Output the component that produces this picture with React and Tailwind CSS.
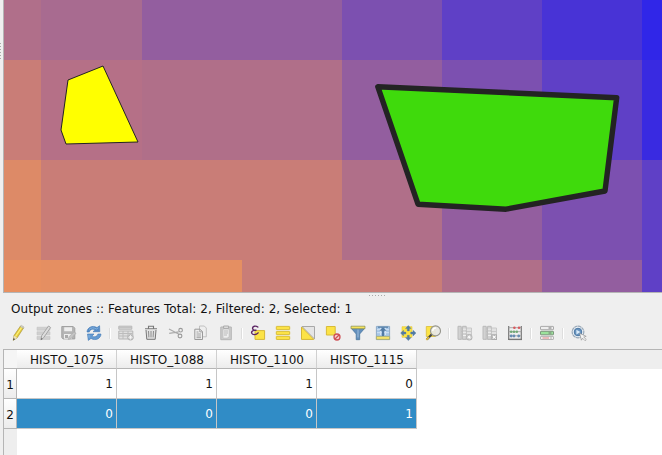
import React from "react";

const raster = [
  ["#b06f8a", "#a86b90", "#935e9f", "#935e9f", "#7c50b0", "#5f40c6", "#4833d6", "#3026e8"],
  ["#c97d77", "#b57087", "#b06f89", "#b06f89", "#935e9f", "#7c50b0", "#5f40c6", "#392ae1"],
  ["#dd8a67", "#c97d77", "#c97d77", "#c97d77", "#b06f89", "#935e9f", "#7c50b0", "#5f40c6"],
  ["#e89060", "#e58f62", "#e58f62", "#c97d77", "#c97d77", "#b06f89", "#935e9f", "#5f40c6"],
];

const columns = ["HISTO_1075", "HISTO_1088", "HISTO_1100", "HISTO_1115"];
const rows = [
  { id: 1, values: [1, 1, 1, 0], selected: false },
  { id: 2, values: [0, 0, 0, 1], selected: true },
];

function Icon({ children }) {
  return (
    <svg className="h-4 w-4 shrink-0 overflow-visible" viewBox="0 0 16 16" fill="none">
      {children}
    </svg>
  );
}

function Separator() {
  return <div className="h-[11px] w-px bg-white shadow-[-1px_0_0_#dedede]" />;
}

const Pencil = () => (
  <Icon>
    <path d="M3 10.5 9.5 1l3 2L6.2 12.8 2.3 15.3z" fill="#e5cc3c" stroke="#aa9740" strokeWidth=".7" />
    <path d="m4.5 11.5 6.5-9.6" stroke="#fff27c" strokeWidth="1.1" />
    <path d="m9.3 1.4 3 2 .8-1.3-2.7-1.7z" fill="#d5d4cd" stroke="#a19f8a" strokeWidth=".5" />
    <path d="m3 10.7 3.1 2.1-3.7 2.4z" fill="#e8dfc3" />
    <path d="m2.7 13.1 1.4 1.1-2.2 1.4z" fill="#444" />
  </Icon>
);

const MultiEdit = () => (
  <Icon>
    <path d="M1 2.2h13v3H1zM1 6.8h13v3H1zM1 11.4h13v3H1z" fill="#d0d0d0" stroke="#c2c2c2" strokeWidth=".6" />
    <path d="M5.6 10.8 12.5 1l2.1 1.5-6.8 10L5 14.8z" fill="#ddd" stroke="#a5a5a5" />
    <path d="m5.3 12.8 1.4 1.1-2 1.4z" fill="#777" />
  </Icon>
);

const Save = () => (
  <Icon>
    <path d="M.8 1.5h11.4l1.6 1.7v10.7H2.2L.8 12.7z" fill="#b5b5b5" stroke="#a2a2a2" />
    <path d="M3.2 2.2h7.8v4H3.2zM3 9h8v4.8H3z" fill="#eee" />
    <path d="M4 10h3v3H4z" fill="#aaa" />
    <path d="m8 11.8 5-5 2 1.5-4.8 5.2-2.8 1z" fill="#c4c4c4" stroke="#aaa" strokeWidth=".7" />
  </Icon>
);

const Refresh = () => (
  <Icon>
    <path d="M1 7c.2-4.4 5.3-7.3 10-4.4l2.6-1.9.2 6H7l2.2-2C6.6 3.5 4 4.2 3.3 7z" fill="#548bc8" stroke="#4278b6" strokeWidth=".6" />
    <path d="M15 9c-.2 4.4-5.3 7.3-10 4.4l-2.7 2L1.5 9H8l-2.1 2.2c2.6 1.2 5.2.6 6-2.2z" fill="#659bd3" stroke="#4278b6" strokeWidth=".6" />
    <path d="M3 4.5c2-2 4.7-2.1 7.4-.5l2-1.2M3 12.8V10" stroke="#9ac2e5" strokeWidth=".7" />
  </Icon>
);

const AddFeature = () => (
  <Icon>
    <path d="M.8 1.2h13v3H.8zM.8 6h14v8H.8z" fill="#e0e0e0" stroke="#b5b5b5" />
    <path d="M1 2.7h12.8M1 8.5h13.5M1 11h13.5M5 6v8M10 6v8" stroke="#bcbcbc" />
    <circle cx="12.5" cy="12.3" r="3.1" fill="#b5b5b5" />
    <path d="m12.5 10 0 4.6M10.2 12.3h4.6M11 10.8l3 3m0-3-3 3" stroke="#fafafa" strokeWidth=".8" />
  </Icon>
);

const Trash = () => (
  <Icon>
    <path d="m3 5 .8 9.3h8.4L13 5" fill="#e1e1e1" stroke="#777" />
    <path d="M2 3.8h12M5.5 3.3v-2h5v2" stroke="#777" strokeWidth="1.1" />
    <path d="m5.5 6 .4 6.4M8 6v6.4M10.5 6l-.4 6.4" stroke="#8c8c8c" />
  </Icon>
);

const Cut = () => (
  <Icon>
    <path d="m1 4 10 5.2M1.2 8.3l9.5-1.5" stroke="#aaa" strokeWidth="1.2" />
    <circle cx="12.6" cy="5.2" r="1.8" stroke="#999" strokeWidth="1.1" />
    <circle cx="12" cy="11" r="1.9" stroke="#999" strokeWidth="1.1" />
  </Icon>
);

const Copy = () => (
  <Icon>
    <path d="M6.5 1h4.8l2 2v8.8H6.5z" fill="#eee" stroke="#bbb" strokeWidth=".9" />
    <path d="M1.8 4.2H7L9.5 6.7v7.8H1.8z" fill="#eee" stroke="#999" />
    <path d="M6.8 4.5v2.4h2.5M3.5 7h2M3.5 9H8M3.5 11H8M3.5 12.7H8" stroke="#999" strokeWidth=".9" />
  </Icon>
);

const Paste = () => (
  <Icon>
    <path d="M2.8 2h10.5v12.7H2.8z" fill="#ccc" stroke="#b5b5b5" />
    <path d="M5 4h6.2v8L9 13.2H5z" fill="#eee" stroke="#bbb" strokeWidth=".7" />
    <path d="M5.6 1h5v2.4h-5z" fill="#e1e1e1" stroke="#aaa" />
    <path d="M6 6h4M6 8h4M6 10h3" stroke="#b8b8b8" />
  </Icon>
);

const SelectExpression = () => (
  <Icon>
    <path d="M5 5.6h9.6v8.8H5z" fill="#fce346" stroke="#d5b735" />
    <path d="M7.8 2C5.6.3 2.3 1.2 2.6 3.5c.1 1.6 2 2 3.8 1.7C3.3 4.9.9 6 1.8 8.3c.8 1.9 4.5 1.7 6.3-.4" stroke="#5d2665" strokeWidth="1.4" strokeLinecap="round" />
  </Icon>
);

const SelectAll = () => (
  <Icon>
    <g fill="#fce346" stroke="#d7ba30" strokeWidth=".9">
      <rect x="1.3" y="1.4" width="13.4" height="3.2" rx=".4" />
      <rect x="1.3" y="6.4" width="13.4" height="3.2" rx=".4" />
      <rect x="1.3" y="11.3" width="13.4" height="3.2" rx=".4" />
    </g>
  </Icon>
);

const InvertSelection = () => (
  <Icon>
    <path d="M2 1.5h12.5V14z" fill="#e5e5e5" stroke="#a8a8a8" />
    <path d="M1.5 2v12.4h12.3z" fill="#fce346" stroke="#d5b735" />
  </Icon>
);

const Deselect = () => (
  <Icon>
    <path d="M1.4 1.5h8.8V10H1.4z" fill="#fce346" stroke="#d8bb37" />
    <circle cx="12" cy="12" r="3" fill="#f8d4d2" stroke="#cf5055" strokeWidth="1.3" />
    <path d="m10 14 4-4" stroke="#cf5055" strokeWidth="1.2" />
  </Icon>
);

const Filter = () => (
  <Icon>
    <path d="M1.2 3.2 6.2 9v5.7h3.5V9l5.1-5.8z" fill="#628fbd" stroke="#447199" strokeWidth=".7" />
    <path d="M8 4.5v8" stroke="#91b3d4" strokeWidth="1.3" />
    <path d="M1 1.2h14v2.5H1z" fill="#f7e45b" stroke="#848d56" strokeWidth=".7" />
  </Icon>
);

const MoveTop = () => (
  <Icon>
    <path d="M1.4 1.4h13.2v13.2H1.4z" fill="#a5c6e7" stroke="#8fabc6" />
    <path d="M2 4.7h12M2 7.7h12M5.5 2v8M10.5 2v8" stroke="#d2e3f4" />
    <path d="M1.4 11.4h13.2v3H1.4z" fill="#f5e369" stroke="#a5a970" strokeWidth=".8" />
    <path d="M8 2.2 4.4 5.8h2.5v5.2h2.2V5.8h2.5z" fill="#527ba4" />
    <path d="M3 2.2h10" stroke="#527ba4" strokeWidth="1.1" />
  </Icon>
);

const PanSelection = () => (
  <Icon>
    <path d="M2 1.7h10v10.6H2z" fill="#fde442" stroke="#e2c63a" strokeWidth=".6" />
    <g fill="#527ba4" stroke="#527ba4" strokeWidth=".4">
      <path d="m8.3.6 2.8 3H9.3v2.3h-2V3.6H5.5zM8.3 15.6l2.8-3H9.3v-2.3h-2v2.3H5.5zM.6 8.1l3-2.8v1.8h2.3v2H3.6v1.8zM16 8.1l-3-2.8v1.8h-2.3v2H13v1.8z" />
    </g>
  </Icon>
);

const ZoomSelection = () => (
  <Icon>
    <path d="M1.3 1.5h9v10h-9z" fill="#fce346" stroke="#d9bd36" strokeWidth=".8" />
    <path d="m7 9-5.2 5.4" stroke="#444" strokeWidth="2.2" />
    <path d="m4 12.1-2.7 2.7" stroke="#e5bf3c" strokeWidth="1.8" />
    <circle cx="10.5" cy="5.9" r="5" fill="#e8e8e2" fillOpacity=".94" stroke="#94948b" strokeWidth="1.1" />
    <path d="M7.7 6c.1-2 1.4-3 3.2-3" stroke="#fff" strokeWidth="1.3" />
  </Icon>
);

function NewColumn({ remove = false }) {
  return (
    <Icon>
      <path d="M3.5 3h11v11.2h-11z" fill="#e2e2e2" stroke="#c9c9c9" />
      <path d="M4 6.5h10M4 10h10" stroke="#c9c9c9" />
      <path d="M1 1.3h3.2v13H1zM5.6 1.3h3.6v13H5.6z" fill="#d2d2d2" stroke="#bababa" />
      <path d="M6 4.2h3M6 7.3h3M6 10.5h3" stroke="#f0f0f0" />
      {remove ? (
        <>
          <path d="M9.3 9.3H15V15H9.3z" fill="#acacac" />
          <path d="m10.7 10.7 3 3m0-3-3 3" stroke="white" strokeWidth="1.2" />
        </>
      ) : (
        <>
          <circle cx="12.2" cy="12.2" r="3.2" fill="#b5b5b5" />
          <path d="M12.2 9.9v4.6M9.9 12.2h4.6M10.7 10.7l3 3m0-3-3 3" stroke="white" strokeWidth=".8" />
        </>
      )}
    </Icon>
  );
}

const Calculator = () => (
  <Icon>
    <path d="M1.7 1v13M14.3 1v13" stroke="#777" strokeWidth="1.2" />
    <path d="M1.5 2.7h13M1.5 6.7h13M1.5 10.8h13" stroke="#999" strokeWidth=".8" />
    <path d="M1 14.4h14" stroke="#777" strokeWidth="1.4" />
    <g fill="#d7595e"><circle cx="7.4" cy="2.7" r="1.3" /><circle cx="12" cy="2.7" r="1.3" /></g>
    <g fill="#70a875"><circle cx="4.2" cy="6.7" r="1.3" /><circle cx="7" cy="6.7" r="1.3" /><circle cx="9.8" cy="6.7" r="1.3" /></g>
    <g fill="#668cb1"><circle cx="4.2" cy="11" r="1.4" /><circle cx="7" cy="11" r="1.4" /><circle cx="11.7" cy="11" r="1.4" /></g>
  </Icon>
);

const ConditionalFormatting = () => (
  <Icon>
    <rect x="1.5" y="1.4" width="13" height="3.3" rx=".5" fill="#eee" stroke="#aaa" />
    <rect x="1.5" y="6.3" width="13" height="3.5" rx=".5" fill="#9be29b" stroke="#7e967e" />
    <rect x="1.5" y="11.4" width="13" height="3.1" rx=".5" fill="#f2eeee" stroke="#b5b5b5" />
    <path d="M3.5 13H10" stroke="#e08585" />
    <path d="M9.5 3h3M9.5 8h3M11.5 13h1" stroke="#747474" />
  </Icon>
);

const Actions = () => (
  <Icon>
    <circle cx="7" cy="7" r="5.8" fill="#edf2f7" stroke="#9aa9b8" strokeWidth="1.2" strokeDasharray="3.4 .4" />
    <circle cx="7" cy="7" r="3.8" fill="#6793bf" stroke="#4c78a4" />
    <path d="m5.4 4.7 4 2.4-4 2.4z" fill="#d9eaf9" />
    <path d="m8.6 8.3 6.6 3-2.5.8 2.6 2.4-1.3 1.2-2.5-2.5-1.1 2z" fill="#f5f5f5" stroke="#888" strokeWidth=".6" />
  </Icon>
);

function MapCanvas() {
  return (
    <div className="flex h-[293px]">
      <div className="flex w-[3px] flex-col justify-center pb-[190px]">
        {[0, 1, 2, 3, 4, 5].map((dot) => (
          <div key={dot} className="mb-[2px] h-px w-px shrink-0 bg-[#aaa]" />
        ))}
      </div>
      <div className="relative w-[659px] border-b border-l border-[#b5b5b5]">
        <div className="grid h-full grid-cols-[37px_101px_100px_100px_100px_100px_100px_20px] grid-rows-[60px_100px_100px_32px]">
          {raster.flat().map((color, index) => (
            <div key={index} style={{ backgroundColor: color }} />
          ))}
        </div>
        <svg className="absolute inset-0 h-[292px] w-[658px]" viewBox="4 0 658 292">
          <path d="M68 80 103 66l35 76-72 2-5-14z" fill="#ff0" stroke="#232323" />
          <path d="M377.8 86.7 616.7 97.7 605 191l-99 18.2-88-5z" fill="#3fda0c" stroke="#232323" strokeWidth="5.4" strokeLinejoin="round" />
        </svg>
      </div>
    </div>
  );
}

function Toolbar() {
  return (
    <div className="flex h-4 items-center pl-[11px]">
      <div className="flex gap-[9px]"><Pencil /><MultiEdit /><Save /><Refresh /></div>
      <div className="flex w-4 justify-center pl-px"><Separator /></div>
      <div className="flex gap-[9px]"><AddFeature /><Trash /><Cut /><Copy /><Paste /></div>
      <div className="flex w-4 justify-center"><Separator /></div>
      <div className="flex gap-[9px]">
        <SelectExpression /><SelectAll /><InvertSelection /><Deselect /><Filter /><MoveTop /><PanSelection /><ZoomSelection />
      </div>
      <div className="flex w-4 justify-center"><Separator /></div>
      <div className="flex gap-[9px]"><NewColumn /><NewColumn remove /><Calculator /></div>
      <div className="flex w-4 justify-center"><Separator /></div>
      <ConditionalFormatting />
      <div className="flex w-4 justify-center"><Separator /></div>
      <Actions />
    </div>
  );
}

function AttributeTable() {
  return (
    <div className="ml-[3px] h-[106px] border-l border-t border-[#b5b5b5] bg-white">
      <div className="flex h-[19px] bg-[#eee]">
        <div className="w-[13px] border-b border-[#b5b5b5] bg-[#f5f5f5]" />
        {columns.map((name) => (
          <div key={name} className="flex w-[100px] items-center justify-center border-b border-r border-b-[#b5b5b5] border-r-[#d0d0d0] bg-linear-to-b from-white to-[#ececec] pt-[2px] pl-px tracking-[0.06px]">
            {name}
          </div>
        ))}
      </div>
      {rows.map(({ id, values, selected }) => (
        <div key={id} className="flex h-[30px]">
          <div className="flex w-[13px] items-center justify-center border-b border-r border-[#b5b5b5] bg-linear-to-b from-white to-[#ececec] pt-0.5">
            {id}
          </div>
          {values.map((value, index) => (
            <div
              key={index}
              className={selected
                ? "flex w-[100px] items-center justify-end border-b border-r border-[#c6c6c6] bg-[#308cc6] pr-[3px] text-white"
                : "flex w-[100px] items-center justify-end border-b border-r border-[#c6c6c6] bg-white pr-[3px]"}
            >
              {value}
            </div>
          ))}
        </div>
      ))}
      <div className="h-[26px] w-[13px] bg-[#eee]" />
    </div>
  );
}

export default function App() {
  return (
    <div className="flex h-[455px] w-[662px] flex-col overflow-hidden bg-[#efefef] font-['DejaVu_Sans',sans-serif] text-[12px] leading-4 text-[#111]">
      <MapCanvas />
      <div className="flex h-[8px] justify-center gap-[2px] pt-[2px] pl-[92px]">
        {[0, 1, 2, 3, 4, 5].map((dot) => <div key={dot} className="h-px w-px bg-[#aaa]" />)}
      </div>
      <div className="h-[24px] whitespace-nowrap pl-[11px] tracking-[0.06px]">Output zones :: Features Total: 2, Filtered: 2, Selected: 1</div>
      <Toolbar />
      <div className="h-2 shrink-0" />
      <AttributeTable />
    </div>
  );
}
